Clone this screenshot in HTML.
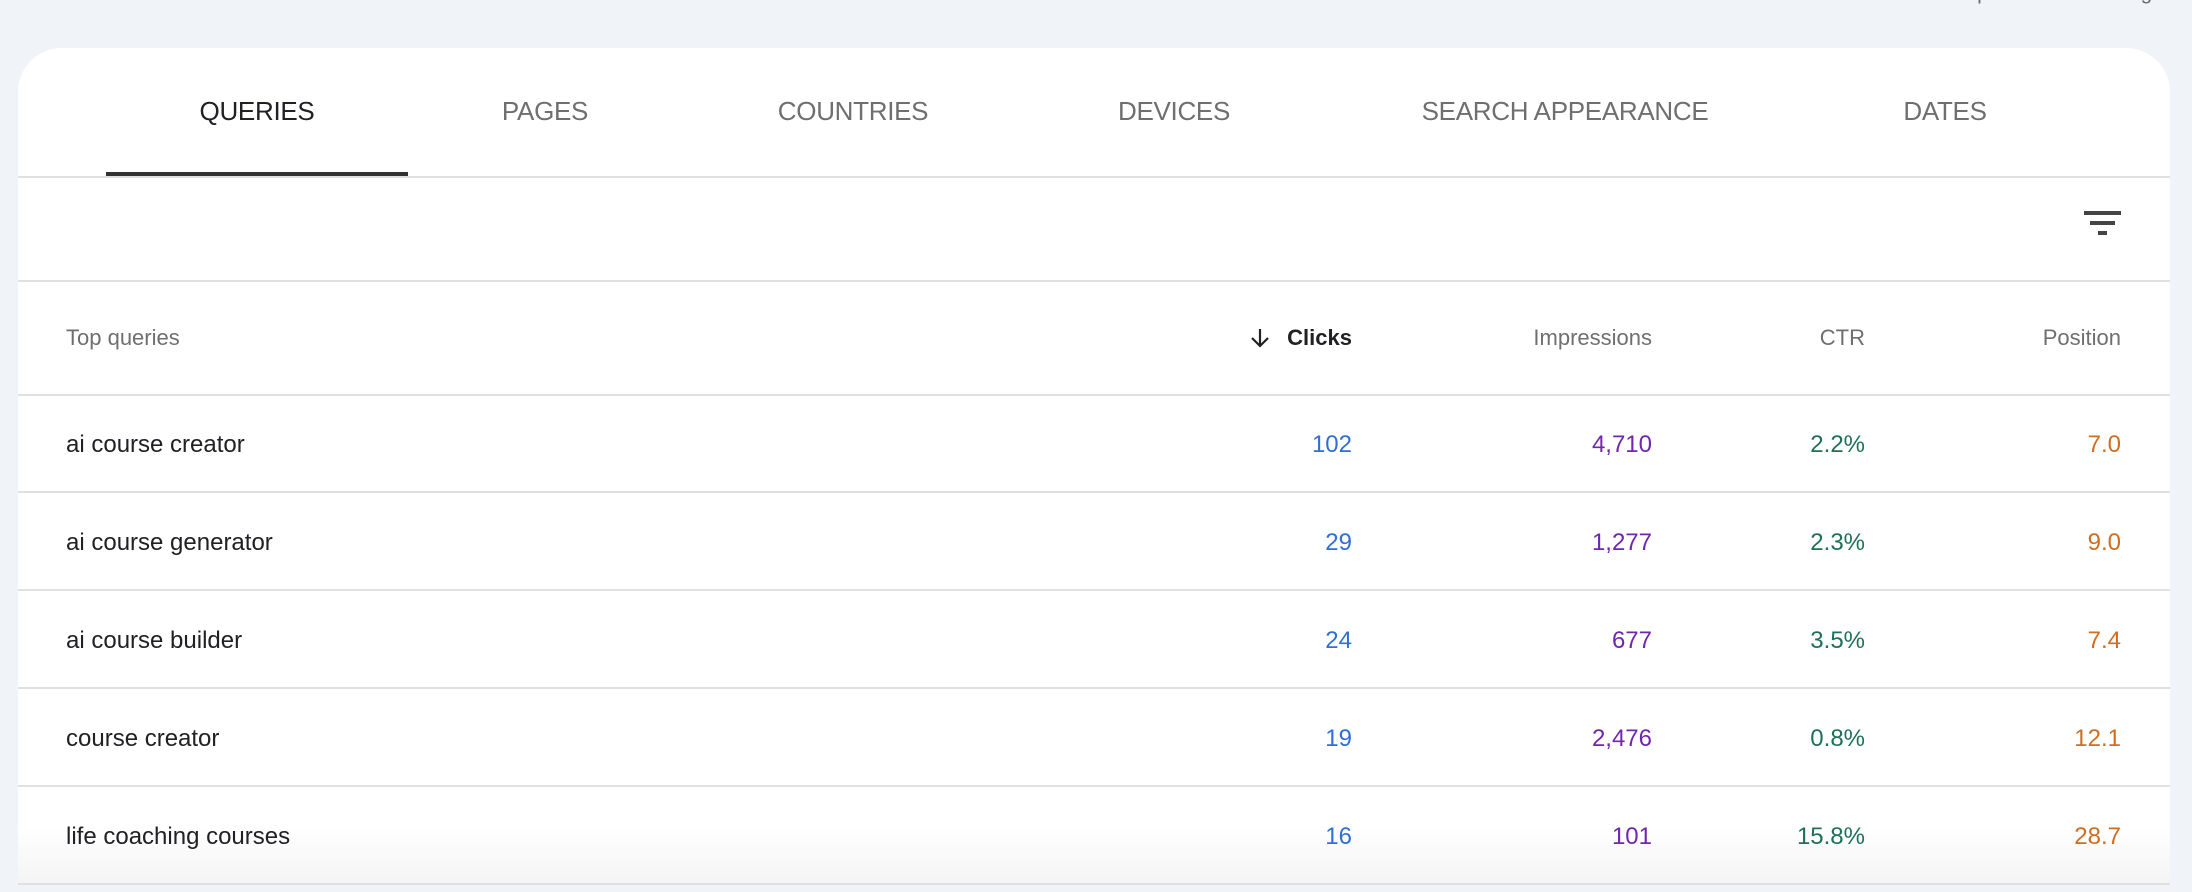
<!DOCTYPE html>
<html><head><meta charset="utf-8"><style>
*{margin:0;padding:0;box-sizing:border-box}
body{width:2192px;height:892px;background:#f0f3f8;position:relative;overflow:hidden;font-family:"Liberation Sans",Arial,sans-serif}
.top{position:absolute;right:28px;top:-19px;font-size:21px;color:#6b6b6b;white-space:nowrap}
.card{position:absolute;left:18px;top:48px;width:2152px;height:836px;background:#fff;border-radius:44px 44px 0 0}
.tab{position:absolute;top:96px;font-size:26px;color:#6f6f6f;white-space:nowrap;transform:translateX(-50%);letter-spacing:-0.3px}
.tab.on{color:#202124}
.ul{position:absolute;left:106px;top:172px;width:302px;height:4px;background:#333}
.hl{position:absolute;left:18px;width:2152px;height:2px;background:#e0e0e0}
.t{position:absolute;font-size:24px;white-space:nowrap;line-height:28px}
.h{font-size:22px;color:#6f6f6f}
.r{text-align:right}
.b{color:#2f6fd6}.p{color:#7126b0}.g{color:#1f7058}.o{color:#cf6e21}
</style></head><body>
<div class="top">Last updated: 4 hours ago</div>
<div class="card"></div>
<div style="position:absolute;left:18px;top:786px;width:2152px;height:98px;background:linear-gradient(#fff,#fff 40%,#f4f4f4)"></div>
<div class="tab on" style="left:257px">QUERIES</div>
<div class="tab" style="left:545px">PAGES</div>
<div class="tab" style="left:853px">COUNTRIES</div>
<div class="tab" style="left:1174px">DEVICES</div>
<div class="tab" style="left:1565px">SEARCH APPEARANCE</div>
<div class="tab" style="left:1945px">DATES</div>
<div class="ul"></div>
<div class="hl" style="top:176px"></div>
<svg style="position:absolute;left:2084px;top:211px" width="37" height="25"><rect x="0" y="0" width="37" height="4" fill="#444"/><rect x="6" y="10" width="25" height="4" fill="#444"/><rect x="14" y="20" width="9" height="4" fill="#444"/></svg>
<div class="hl" style="top:280px"></div>
<div class="t h" style="left:66px;top:324px">Top queries</div>
<svg style="position:absolute;left:1248px;top:326px" width="24" height="24" viewBox="0 0 24 24"><path d="M12 3v17M4 12l8 8 8-8" fill="none" stroke="#202124" stroke-width="2.2"/></svg>
<div class="t r" style="right:840px;top:324px;font-size:22px;color:#202124;font-weight:bold">Clicks</div>
<div class="t h r" style="right:540px;top:324px">Impressions</div>
<div class="t h r" style="right:327px;top:324px">CTR</div>
<div class="t h r" style="right:71px;top:324px">Position</div>
<div class="hl" style="top:394px"></div>
<div class="hl" style="top:491px"></div>
<div class="hl" style="top:589px"></div>
<div class="hl" style="top:687px"></div>
<div class="hl" style="top:785px"></div>
<div class="hl" style="top:883px"></div>

<div class="t" style="left:66px;top:431px;color:#202124">ai course creator</div>
<div class="t r b" style="right:840px;top:431px">102</div>
<div class="t r p" style="right:540px;top:431px">4,710</div>
<div class="t r g" style="right:327px;top:431px">2.2%</div>
<div class="t r o" style="right:71px;top:431px">7.0</div>

<div class="t" style="left:66px;top:529px;color:#202124">ai course generator</div>
<div class="t r b" style="right:840px;top:529px">29</div>
<div class="t r p" style="right:540px;top:529px">1,277</div>
<div class="t r g" style="right:327px;top:529px">2.3%</div>
<div class="t r o" style="right:71px;top:529px">9.0</div>

<div class="t" style="left:66px;top:627px;color:#202124">ai course builder</div>
<div class="t r b" style="right:840px;top:627px">24</div>
<div class="t r p" style="right:540px;top:627px">677</div>
<div class="t r g" style="right:327px;top:627px">3.5%</div>
<div class="t r o" style="right:71px;top:627px">7.4</div>

<div class="t" style="left:66px;top:725px;color:#202124">course creator</div>
<div class="t r b" style="right:840px;top:725px">19</div>
<div class="t r p" style="right:540px;top:725px">2,476</div>
<div class="t r g" style="right:327px;top:725px">0.8%</div>
<div class="t r o" style="right:71px;top:725px">12.1</div>

<div class="t" style="left:66px;top:823px;color:#202124">life coaching courses</div>
<div class="t r b" style="right:840px;top:823px">16</div>
<div class="t r p" style="right:540px;top:823px">101</div>
<div class="t r g" style="right:327px;top:823px">15.8%</div>
<div class="t r o" style="right:71px;top:823px">28.7</div>
</body></html>
